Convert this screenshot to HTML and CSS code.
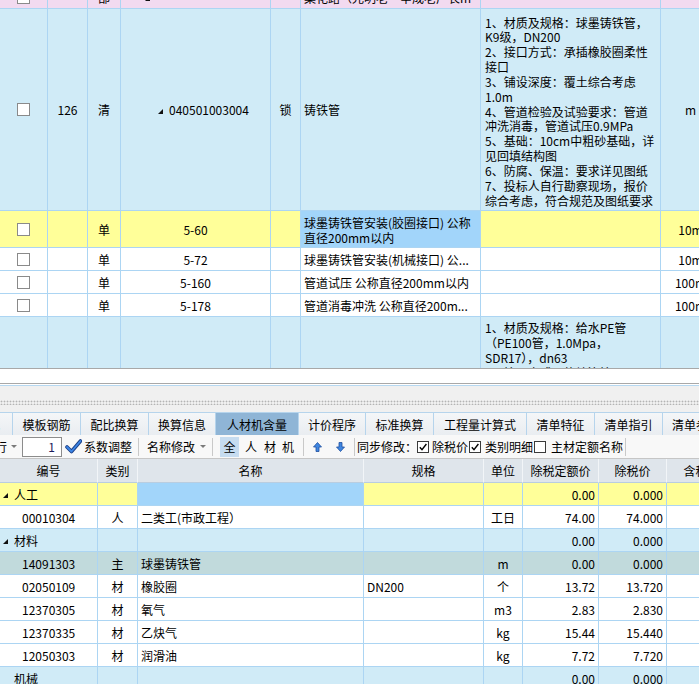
FILE: index.html
```html
<!DOCTYPE html>
<html lang="zh-CN">
<head>
<meta charset="utf-8">
<title>清单</title>
<link rel="stylesheet" href="styles.css">
</head>
<body>
<div class="gtop">
  <div class="gt-inner">
    <div class="row rh23 pink">
      <div class="c"><span class="cb"></span></div>
      <div class="c"></div>
      <div class="c">部</div>
      <div class="c l code-p"><svg class="tri" viewBox="0 0 5 5"><polygon points="5,0 5,5 0,5"/></svg></div>
      <div class="c"></div>
      <div class="c l">集花路（光明老一辛成老广长m</div>
      <div class="c"></div>
      <div class="c"></div>
    </div>
    <div class="row rh202 blue">
      <div class="c"><span class="cb"></span></div>
      <div class="c num">126</div>
      <div class="c">清</div>
      <div class="c l code-t"><svg class="tri" viewBox="0 0 5 5"><polygon points="5,0 5,5 0,5"/></svg><span class="num gap">040501003004</span></div>
      <div class="c">锁</div>
      <div class="c l">铸铁管</div>
      <div class="c desc">1、材质及规格：球墨铸铁管，<br>K9级，DN200<br>2、接口方式：承插橡胶圈柔性<br>接口<br>3、铺设深度：覆土综合考虑<br>1.0m<br>4、管道检验及试验要求：管道<br>冲洗消毒，管道试压0.9MPa<br>5、基础：10cm中粗砂基础，详<br>见回填结构图<br>6、防腐、保温：要求详见图纸<br>7、投标人自行勘察现场，报价<br>综合考虑，符合规范及图纸要求</div>
      <div class="c num">m</div>
    </div>
    <div class="row rh37 yellow">
      <div class="c"><span class="cb"></span></div>
      <div class="c"></div>
      <div class="c">单</div>
      <div class="c num">5-60</div>
      <div class="c"></div>
      <div class="c l sel wrap">球墨铸铁管安装(胶圈接口) 公称<br>直径200mm以内</div>
      <div class="c"></div>
      <div class="c num">10m</div>
    </div>
    <div class="row rh23 white">
      <div class="c"><span class="cb"></span></div>
      <div class="c"></div>
      <div class="c">单</div>
      <div class="c num">5-72</div>
      <div class="c"></div>
      <div class="c l">球墨铸铁管安装(机械接口) 公...</div>
      <div class="c"></div>
      <div class="c num">10m</div>
    </div>
    <div class="row rh23 white">
      <div class="c"><span class="cb"></span></div>
      <div class="c"></div>
      <div class="c">单</div>
      <div class="c num">5-160</div>
      <div class="c"></div>
      <div class="c l">管道试压 公称直径200mm以内</div>
      <div class="c"></div>
      <div class="c num">100m</div>
    </div>
    <div class="row rh23 white">
      <div class="c"><span class="cb"></span></div>
      <div class="c"></div>
      <div class="c">单</div>
      <div class="c num">5-178</div>
      <div class="c"></div>
      <div class="c l">管道消毒冲洗 公称直径200m...</div>
      <div class="c"></div>
      <div class="c num">100m</div>
    </div>
    <div class="row rh150 blue">
      <div class="c"><span class="cb"></span></div>
      <div class="c"></div>
      <div class="c"></div>
      <div class="c"></div>
      <div class="c"></div>
      <div class="c"></div>
      <div class="c desc top">1、材质及规格：给水PE管<br>（PE100管，1.0Mpa，<br>SDR17），dn63<br>2、接口方式：热熔连接<br>3、铺设深度：覆土综合考虑</div>
      <div class="c"></div>
    </div>
  </div>
</div>
<div class="hbar"></div>
<div class="hbar2"></div>
<div class="splitter"><div class="dots"></div></div>

<div class="tabs">
  <div class="tab w13"><span class="cut">式</span></div>
  <div class="tab w68">模板钢筋</div>
  <div class="tab w68">配比换算</div>
  <div class="tab w67">换算信息</div>
  <div class="tab w83 active">人材机含量</div>
  <div class="tab w67">计价程序</div>
  <div class="tab w68">标准换算</div>
  <div class="tab w93">工程量计算式</div>
  <div class="tab w68">清单特征</div>
  <div class="tab w68">清单指引</div>
  <div class="tab w80 lefttxt">清单参考</div>
</div>

<div class="toolbar">
  <span class="ti t-cut">行</span>
  <span class="dd m4"></span>
  <span class="inp">1</span>
  <svg class="tick" viewBox="0 0 17 15"><path d="M2 8 L6.5 12.5 L15.5 2" fill="none" stroke="#1b3f86" stroke-width="3.6" stroke-linecap="round" stroke-linejoin="round"/><path d="M2 8 L6.5 12.5 L15.5 2" fill="none" stroke="#3d86e6" stroke-width="1.8" stroke-linecap="round" stroke-linejoin="round"/></svg>
  <span class="ti w48 m2">系数调整</span>
  <span class="sep m6"></span>
  <span class="ti w48 m8">名称修改</span>
  <span class="dd m5"></span>
  <span class="sep m6"></span>
  <span class="ti pressed">全</span>
  <span class="ti w12 m6">人</span>
  <span class="ti w12 m7">材</span>
  <span class="ti w12 m6">机</span>
  <span class="sep m9"></span>
  <svg class="arrow m9" viewBox="0 0 9 10"><polygon points="4.5,0.5 8.5,5 6,5 6,9.5 3,9.5 3,5 0.5,5" fill="#3f86e0" stroke="#1f4f9e" stroke-width="0.8"/></svg>
  <svg class="arrow m14" viewBox="0 0 9 10"><polygon points="4.5,9.5 8.5,5 6,5 6,0.5 3,0.5 3,5 0.5,5" fill="#3f86e0" stroke="#1f4f9e" stroke-width="0.8"/></svg>
  <span class="sep m9"></span>
  <span class="ti w60 m2">同步修改：</span>
  <span class="tcb"><svg viewBox="0 0 10 10"><path d="M1.8 5.2 L4 7.6 L8.4 2" fill="none" stroke="#000" stroke-width="1.4"/></svg></span>
  <span class="ti w36 m3">除税价</span>
  <span class="tcb m1"><svg viewBox="0 0 10 10"><path d="M1.8 5.2 L4 7.6 L8.4 2" fill="none" stroke="#000" stroke-width="1.4"/></svg></span>
  <span class="ti w48 m4">类别明细</span>
  <span class="tcb m1"></span>
  <span class="ti w72 m5">主材定额名称</span>
  <span class="sep m2"></span>
</div>

<div class="gbot">
  <div class="row hrow">
    <div class="h">编号</div>
    <div class="h">类别</div>
    <div class="h">名称</div>
    <div class="h">规格</div>
    <div class="h">单位</div>
    <div class="h">除税定额价</div>
    <div class="h">除税价</div>
    <div class="h">含税价</div>
  </div>
  <div class="row rh23 yellow">
    <div class="c l grp"><svg class="tri" viewBox="0 0 5 5"><polygon points="5,0 5,5 0,5"/></svg><span class="gap2">人工</span></div>
    <div class="c"></div>
    <div class="c sel"></div>
    <div class="c"></div>
    <div class="c"></div>
    <div class="c r num">0.00</div>
    <div class="c r num">0.000</div>
    <div class="c"></div>
  </div>
  <div class="row rh23 white">
    <div class="c l code num">00010304</div>
    <div class="c">人</div>
    <div class="c l">二类工(市政工程）</div>
    <div class="c"></div>
    <div class="c">工日</div>
    <div class="c r num">74.00</div>
    <div class="c r num">74.000</div>
    <div class="c"></div>
  </div>
  <div class="row rh23 blue">
    <div class="c l grp"><svg class="tri" viewBox="0 0 5 5"><polygon points="5,0 5,5 0,5"/></svg><span class="gap2">材料</span></div>
    <div class="c"></div>
    <div class="c"></div>
    <div class="c"></div>
    <div class="c"></div>
    <div class="c r num">0.00</div>
    <div class="c r num">0.000</div>
    <div class="c"></div>
  </div>
  <div class="row rh23 teal">
    <div class="c l code num">14091303</div>
    <div class="c">主</div>
    <div class="c l">球墨铸铁管</div>
    <div class="c"></div>
    <div class="c num">m</div>
    <div class="c r num">0.00</div>
    <div class="c r num">0.000</div>
    <div class="c"></div>
  </div>
  <div class="row rh23 white">
    <div class="c l code num">02050109</div>
    <div class="c">材</div>
    <div class="c l">橡胶圈</div>
    <div class="c l num">DN200</div>
    <div class="c">个</div>
    <div class="c r num">13.72</div>
    <div class="c r num">13.720</div>
    <div class="c"></div>
  </div>
  <div class="row rh23 white">
    <div class="c l code num">12370305</div>
    <div class="c">材</div>
    <div class="c l">氧气</div>
    <div class="c"></div>
    <div class="c num">m3</div>
    <div class="c r num">2.83</div>
    <div class="c r num">2.830</div>
    <div class="c"></div>
  </div>
  <div class="row rh23 white">
    <div class="c l code num">12370335</div>
    <div class="c">材</div>
    <div class="c l">乙炔气</div>
    <div class="c"></div>
    <div class="c num">kg</div>
    <div class="c r num">15.44</div>
    <div class="c r num">15.440</div>
    <div class="c"></div>
  </div>
  <div class="row rh23 white">
    <div class="c l code num">12050303</div>
    <div class="c">材</div>
    <div class="c l">润滑油</div>
    <div class="c"></div>
    <div class="c num">kg</div>
    <div class="c r num">7.72</div>
    <div class="c r num">7.720</div>
    <div class="c"></div>
  </div>
  <div class="row rh23 blue">
    <div class="c l grp"><span class="gap3">机械</span></div>
    <div class="c"></div>
    <div class="c"></div>
    <div class="c"></div>
    <div class="c"></div>
    <div class="c r num">0.00</div>
    <div class="c r num">0.000</div>
    <div class="c"></div>
  </div>
</div>
</body>
</html>
```
FILE: styles.css
```css
* { box-sizing: border-box; }
html, body { margin: 0; padding: 0; }
body {
  width: 699px;
  height: 684px;
  overflow: hidden;
  background: #f0f0f0;
  font-family: "Noto Sans CJK SC", "Liberation Sans", sans-serif;
  font-size: 12px;
  color: #000;
}

/* ---------- top grid ---------- */
.gtop { height: 368px; overflow: hidden; background: #fff; }
.gt-inner { margin-top: -14px; width: 721px; }
.row { display: grid; }
.gtop .row { grid-template-columns: 48px 40px 33px 150px 30px 180px 180px 60px; }
.rh23 { height: 23px; }
.rh37 { height: 37px; }
.rh150 { height: 150px; }
.rh202 { height: 202px; }

.c {
  border-right: 1px solid #acd5f3;
  border-bottom: 1px solid #acd5f3;
  display: flex;
  align-items: center;
  justify-content: center;
  white-space: nowrap;
  overflow: hidden;
  line-height: 15px;
}
.l { justify-content: flex-start; padding-left: 3px; }
.r { justify-content: flex-end; padding-right: 3px; }
.wrap { white-space: normal; padding-top: 1px; }
.desc {
  justify-content: flex-start;
  padding-left: 4px;
  padding-top: 4px;
  white-space: nowrap;
  display: block;
  align-self: stretch;
}
.rh202 .desc { display: flex; align-items: center; line-height: 14.85px; padding-top: 5px; }
.desc.top { padding-top: 3px; }

.num { font-size: 12px; }
.code-t { padding-left: 37px; align-items: center; }
.code-p { padding-left: 24px; }
.gap { margin-left: 6px; }
.gap2 { margin-left: 6px; }
.gap3 { margin-left: 11px; }
.tri { width: 5px; height: 5px; fill: #111; flex: none; margin-top: 3px; }

.pink { background: #f2daf0; }
.blue { background: #d0ebf7; }
.yellow { background: #ffff99; }
.white { background: #fff; }
.teal { background: #c1dadc; }
.sel { background: #a2d5fa; }

.cb {
  width: 13px;
  height: 13px;
  border: 1px solid #8a8a8a;
  background: #fff;
  flex: none;
}

/* ---------- horizontal bar & splitter ---------- */
.hbar {
  height: 16px;
  background: #fff;
  border-top: 1px solid #a8a8a8;
  border-bottom: 1px solid #a8a8a8;
}
.hbar2 {
  height: 2px;
  background: #fff;
  border-bottom: 1px solid #b6d8f1;
}
.splitter { height: 26px; padding-top: 14px; }
.dots {
  height: 5px;
  background-image: radial-gradient(circle, #b4b4b4 0.8px, transparent 1.1px);
  background-size: 3px 3px;
}

/* ---------- tabs ---------- */
.tabs {
  display: flex;
  height: 23px;
  border-top: 1px solid #b6d4ec;
  overflow: hidden;
  white-space: nowrap;
}
.tab {
  flex: none;
  height: 22px;
  border-right: 1px solid #b6d4ec;
  background: linear-gradient(#f4f6f8, #e9edf1);
  display: flex;
  align-items: center;
  justify-content: center;
  overflow: hidden;
}
.tab.active { background: #8fb5d6; }
.tab.lefttxt { justify-content: flex-start; padding-left: 9px; }
.cut { margin-left: -12px; }
.w13 { width: 13px; justify-content: flex-start; }
.w67 { width: 67px; }
.w68 { width: 68px; }
.w80 { width: 80px; }
.w83 { width: 83px; }
.w93 { width: 93px; }

/* ---------- toolbar ---------- */
.toolbar {
  height: 23px;
  display: flex;
  align-items: center;
  background: #f8f8f8;
  white-space: nowrap;
  overflow: hidden;
}
.toolbar > * { flex: none; }
.ti { display: block; line-height: 16px; }
.t-cut { width: 12px; margin-left: -5px; }
.w12 { width: 12px; }
.w36 { width: 36px; }
.w48 { width: 48px; }
.w60 { width: 60px; }
.w72 { width: 72px; }
.m1 { margin-left: 1px; }
.m2 { margin-left: 2px; }
.m3 { margin-left: 3px; }
.m4 { margin-left: 4px; }
.m5 { margin-left: 5px; }
.m6 { margin-left: 6px; }
.m7 { margin-left: 7px; }
.m8 { margin-left: 8px; }
.m9 { margin-left: 9px; }
.m14 { margin-left: 14px; }
.dd {
  width: 0;
  height: 0;
  border-left: 3px solid transparent;
  border-right: 3px solid transparent;
  border-top: 3px solid #7a7a7a;
}
.inp {
  margin-left: 5px;
  width: 40px;
  height: 20px;
  border: 1px solid #8c8c8c;
  background: #fff;
  text-align: right;
  padding-right: 6px;
  line-height: 18px;
  color: #1a1a5a;
}
.tick { width: 17px; height: 15px; margin-left: 3px; }
.sep { width: 1px; height: 18px; background: #c9c9c9; }
.pressed {
  margin-left: 7px;
  width: 19px;
  height: 20px;
  line-height: 20px;
  text-align: center;
  background: #c6dcf0;
}
.arrow { width: 9px; height: 10px; }
.tcb {
  width: 12px;
  height: 12px;
  border: 1px solid #3a3a3a;
  background: #fff;
  display: block;
}
.tcb svg { display: block; width: 10px; height: 10px; }

/* ---------- bottom grid ---------- */
.gbot { overflow: hidden; background: #fff; }
.gbot .row { grid-template-columns: 98px 40px 226px 120px 39px 76px 68px 70px; width: 737px; }
.hrow { height: 25px; border-top: 1px solid #c6c6c6; background: #dfe5eb; }
.h {
  border-right: 1px solid #f2f5f8;
  border-bottom: 1px solid #b9cde0;
  display: flex;
  align-items: center;
  justify-content: center;
  white-space: nowrap;
  overflow: hidden;
}
.code { padding-left: 22px; }
.grp { padding-left: 3px; }
```
